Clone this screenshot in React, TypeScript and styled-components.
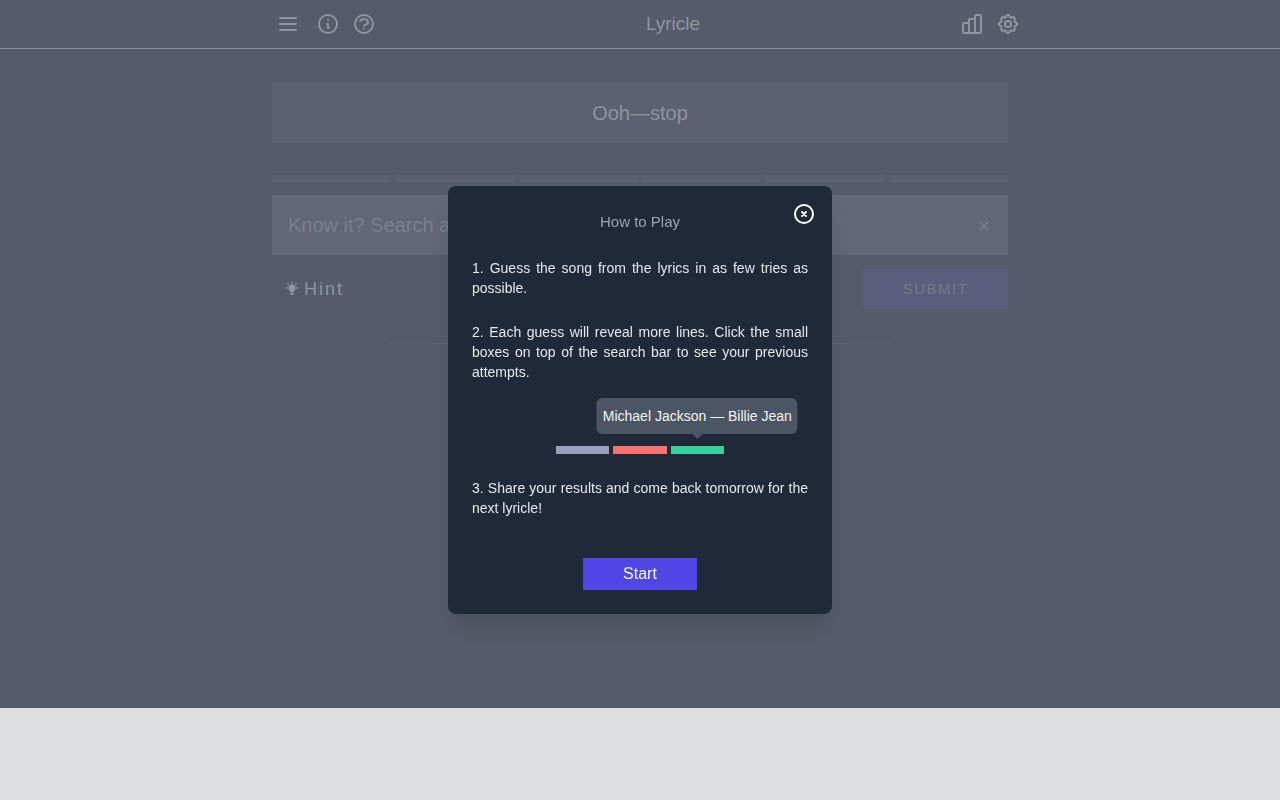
import React from "react";
import styled, { createGlobalStyle } from "styled-components";

const Global = createGlobalStyle`
  *, *::before, *::after { box-sizing: border-box; }
  body {
    margin: 0;
    background: #dcdee1;
    color: #90949e;
    font-family: "Liberation Sans", Arial, sans-serif;
    font-size: 16px;
    line-height: 24px;
  }
  button, input { font: inherit; color: inherit; border: 0; border-radius: 0; }
  button { padding: 0; background: none; cursor: pointer; }
  h1, h2, p { margin: 0; font-weight: 400; }
`;

const Page = styled.div`
  min-height: 100vh;
  display: flex;
  flex-direction: column;
`;

const Game = styled.div`
  flex: 1;
  background: #555b6a;
`;

const AdSlot = styled.footer`
  height: 92px;
  border-top: 1px solid #dfe1e1;
`;

const Header = styled.header`
  border-bottom: 1px solid #8b909b;
`;

const HeaderInner = styled.div`
  display: flex;
  align-items: center;
  max-width: 768px;
  height: 48px;
  margin: 0 auto;
  padding: 0 4px 0 20px;
`;

const IconGroup = styled.div`
  display: flex;
  gap: 12px;
`;

const IconButton = styled.button<{ $spaced?: boolean }>`
  width: 24px;
  height: 24px;
  margin-right: ${(p) => (p.$spaced ? "4px" : "0")};
`;

const Title = styled.h1`
  flex: 1;
  padding-left: 10px;
  font-size: 19px;
  text-align: center;
`;

const Main = styled.main`
  display: flex;
  flex-direction: column;
  max-width: 768px;
  margin: 0 auto;
  padding: 34px 16px 0;
`;

const Lyric = styled.p`
  padding: 16px;
  background: #5b6170;
  font-size: 20px;
  line-height: 28px;
  text-align: center;
`;

const Attempts = styled.div`
  display: grid;
  grid-template-columns: repeat(6, 1fr);
  gap: 4px;
  margin: 32px 0 12px;
`;

const Attempt = styled.div`
  height: 8px;
  background: #5a6070;
`;

const SearchBar = styled.div`
  display: flex;
  align-items: center;
  height: 60px;
  padding: 0 12px 0 16px;
  background: #616776;
  color: #7a808d;
`;

const SearchInput = styled.input`
  flex: 1;
  min-width: 0;
  padding: 0;
  background: none;
  font-size: 20px;
  outline: none;
  &::placeholder { color: #7a808d; opacity: 1; }
`;

const ClearButton = styled.button`
  width: 24px;
  height: 24px;
  padding-top: 2px;
  display: grid;
  place-items: center;
`;

const Actions = styled.div`
  display: flex;
  justify-content: space-between;
  margin-top: 14px;
`;

const HintButton = styled.button`
  display: flex;
  align-items: center;
  gap: 4px;
  height: 40px;
  padding: 0 12px;
  font-size: 18px;
  letter-spacing: 2px;
`;

const SubmitButton = styled.button`
  width: 145px;
  height: 40px;
  background: #5a5d7b;
  color: #757b8a;
  letter-spacing: 0.1em;
  font-size: 15px;
`;

const Divider = styled.hr`
  width: 68%;
  height: 1px;
  margin: 34px auto 0;
  border: 0;
  background: #5b6170;
`;

const Overlay = styled.div`
  position: fixed;
  inset: 0;
  display: flex;
  align-items: center;
  justify-content: center;
`;

const Modal = styled.section`
  position: relative;
  display: flex;
  flex-direction: column;
  align-items: center;
  width: 384px;
  max-width: 100%;
  padding: 24px;
  border-radius: 8px;
  background: #1f2937;
  box-shadow: 0 20px 25px -5px rgba(0, 0, 0, 0.1), 0 10px 10px -5px rgba(0, 0, 0, 0.04);
  color: #e5e7eb;
`;

const CloseButton = styled.button`
  position: absolute;
  top: 16px;
  right: 16px;
  width: 24px;
  height: 24px;
  color: #fff;
`;

const ModalTitle = styled.h2`
  font-size: 15px;
  line-height: 24px;
  color: #9ca3af;
`;

const Rule = styled.p`
  width: 100%;
  margin-top: 24px;
  font-size: 14px;
  line-height: 20px;
  text-align: justify;
`;

const Example = styled.div`
  display: grid;
  grid-template-columns: repeat(3, 1fr);
  gap: 4px;
  width: 50%;
  margin-top: 64px;
`;

const ExampleBox = styled.div<{ $color: string }>`
  position: relative;
  height: 8px;
  background: ${(p) => p.$color};
`;

const Tooltip = styled.div`
  position: absolute;
  bottom: 20px;
  left: 50%;
  transform: translateX(-50%);
  padding: 8px 6px;
  border-radius: 6px;
  background: #4b5563;
  color: #f3f4f6;
  font-size: 14px;
  line-height: 20px;
  white-space: nowrap;
  &::after {
    content: "";
    position: absolute;
    top: 100%;
    left: 50%;
    margin-left: -5px;
    border: 5px solid transparent;
    border-top-color: #4b5563;
    border-bottom: 0;
  }
`;

const StartButton = styled.button`
  width: 114px;
  height: 32px;
  margin-top: 40px;
  background: #4f46e5;
  color: #f3f4f6;
`;

const Svg = styled.svg`
  display: block;
`;

function LineIcon({ d, children }: { d?: string; children?: React.ReactNode }) {
  return (
    <Svg width="24" height="24" viewBox="0 0 24 24" fill="none" stroke="currentColor"
      strokeWidth="2" strokeLinecap="round" strokeLinejoin="round" aria-hidden="true">
      {d && <path d={d} />}
      {children}
    </Svg>
  );
}

const MENU = "M4 6h16M4 12h16M4 18h16";
const INFO = "M13 16h-1v-4h-1m1-4h.01M21 12a9 9 0 11-18 0 9 9 0 0118 0z";
const HELP =
  "M8.228 9c.549-1.165 2.03-2 3.772-2 2.21 0 4 1.343 4 3 0 1.4-1.278 2.575-3.006 2.907-.542.104-.994.54-.994 1.093m0 3h.01M21 12a9 9 0 11-18 0 9 9 0 0118 0z";
const CHART =
  "M9 21H4a1 1 0 01-1-1v-8a1 1 0 011-1h5M15 21H9V8a1 1 0 011-1h5M15 21V4a1 1 0 011-1h4a1 1 0 011 1v16a1 1 0 01-1 1z";
const COG =
  "M10.325 4.317c.426-1.756 2.924-1.756 3.35 0a1.724 1.724 0 002.573 1.066c1.543-.94 3.31.826 2.37 2.37a1.724 1.724 0 001.065 2.572c1.756.426 1.756 2.924 0 3.35a1.724 1.724 0 00-1.066 2.573c.94 1.543-.826 3.31-2.37 2.37a1.724 1.724 0 00-2.572 1.065c-.426 1.756-2.924 1.756-3.35 0a1.724 1.724 0 00-2.573-1.066c-1.543.94-3.31-.826-2.37-2.37a1.724 1.724 0 00-1.065-2.572c-1.756-.426-1.756-2.924 0-3.35a1.724 1.724 0 001.066-2.573c-.94-1.543.826-3.31 2.37-2.37.996.608 2.296.07 2.572-1.065z";

export default function App() {
  return (
    <>
      <Global />
      <Page>
        <Game>
          <Header>
            <HeaderInner>
              <IconGroup>
                <IconButton $spaced aria-label="Menu"><LineIcon d={MENU} /></IconButton>
                <IconButton aria-label="About"><LineIcon d={INFO} /></IconButton>
                <IconButton aria-label="Help"><LineIcon d={HELP} /></IconButton>
              </IconGroup>
              <Title>Lyricle</Title>
              <IconGroup>
                <IconButton aria-label="Statistics"><LineIcon d={CHART} /></IconButton>
                <IconButton aria-label="Settings">
                  <LineIcon d={COG}><circle cx="12" cy="12" r="3" /></LineIcon>
                </IconButton>
              </IconGroup>
            </HeaderInner>
          </Header>
          <Main>
            <Lyric>Ooh—stop</Lyric>
            <Attempts>
              {[1, 2, 3, 4, 5, 6].map((n) => <Attempt key={n} />)}
            </Attempts>
            <SearchBar>
              <SearchInput type="text" aria-label="Search for a song" placeholder="Know it? Search a" />
              <ClearButton aria-label="Clear">
                <Svg width="10" height="10" viewBox="0 0 10 10" fill="none" stroke="currentColor" strokeWidth="1.4">
                  <path d="M0.5 0.5l9 9M9.5 0.5l-9 9" />
                </Svg>
              </ClearButton>
            </SearchBar>
            <Actions>
              <HintButton>
                <Svg width="16" height="16" viewBox="0 0 16 16" fill="currentColor" aria-hidden="true">
                  <circle cx="8" cy="7" r="3.5" />
                  <path d="M6 9h4v2.2H6zM6.2 12h3.6v.8l-1 1.2H7.2l-1-1.2z" />
                  <path d="M8 .7v1.8M3.4 2.6l1.3 1.3M12.6 2.6l-1.3 1.3M1.7 7h2M12.3 7h2"
                    stroke="currentColor" strokeWidth="1.5" />
                </Svg>
                Hint
              </HintButton>
              <SubmitButton>SUBMIT</SubmitButton>
            </Actions>
            <Divider />
          </Main>
        </Game>
        <AdSlot />
      </Page>
      <Overlay>
        <Modal role="dialog" aria-modal="true" aria-labelledby="how-to-play">
          <CloseButton aria-label="Close">
            <LineIcon><circle cx="12" cy="12" r="9" /><path d="M10 10l4 4M14 10l-4 4" /></LineIcon>
          </CloseButton>
          <ModalTitle id="how-to-play">How to Play</ModalTitle>
          <Rule>1. Guess the song from the lyrics in as few tries as possible.</Rule>
          <Rule>
            2. Each guess will reveal more lines. Click the small boxes on top of the search bar to
            see your previous attempts.
          </Rule>
          <Example>
            <ExampleBox $color="#94a3b8" />
            <ExampleBox $color="#f87171" />
            <ExampleBox $color="#34d399">
              <Tooltip>Michael Jackson — Billie Jean</Tooltip>
            </ExampleBox>
          </Example>
          <Rule>3. Share your results and come back tomorrow for the next lyricle!</Rule>
          <StartButton>Start</StartButton>
        </Modal>
      </Overlay>
    </>
  );
}
